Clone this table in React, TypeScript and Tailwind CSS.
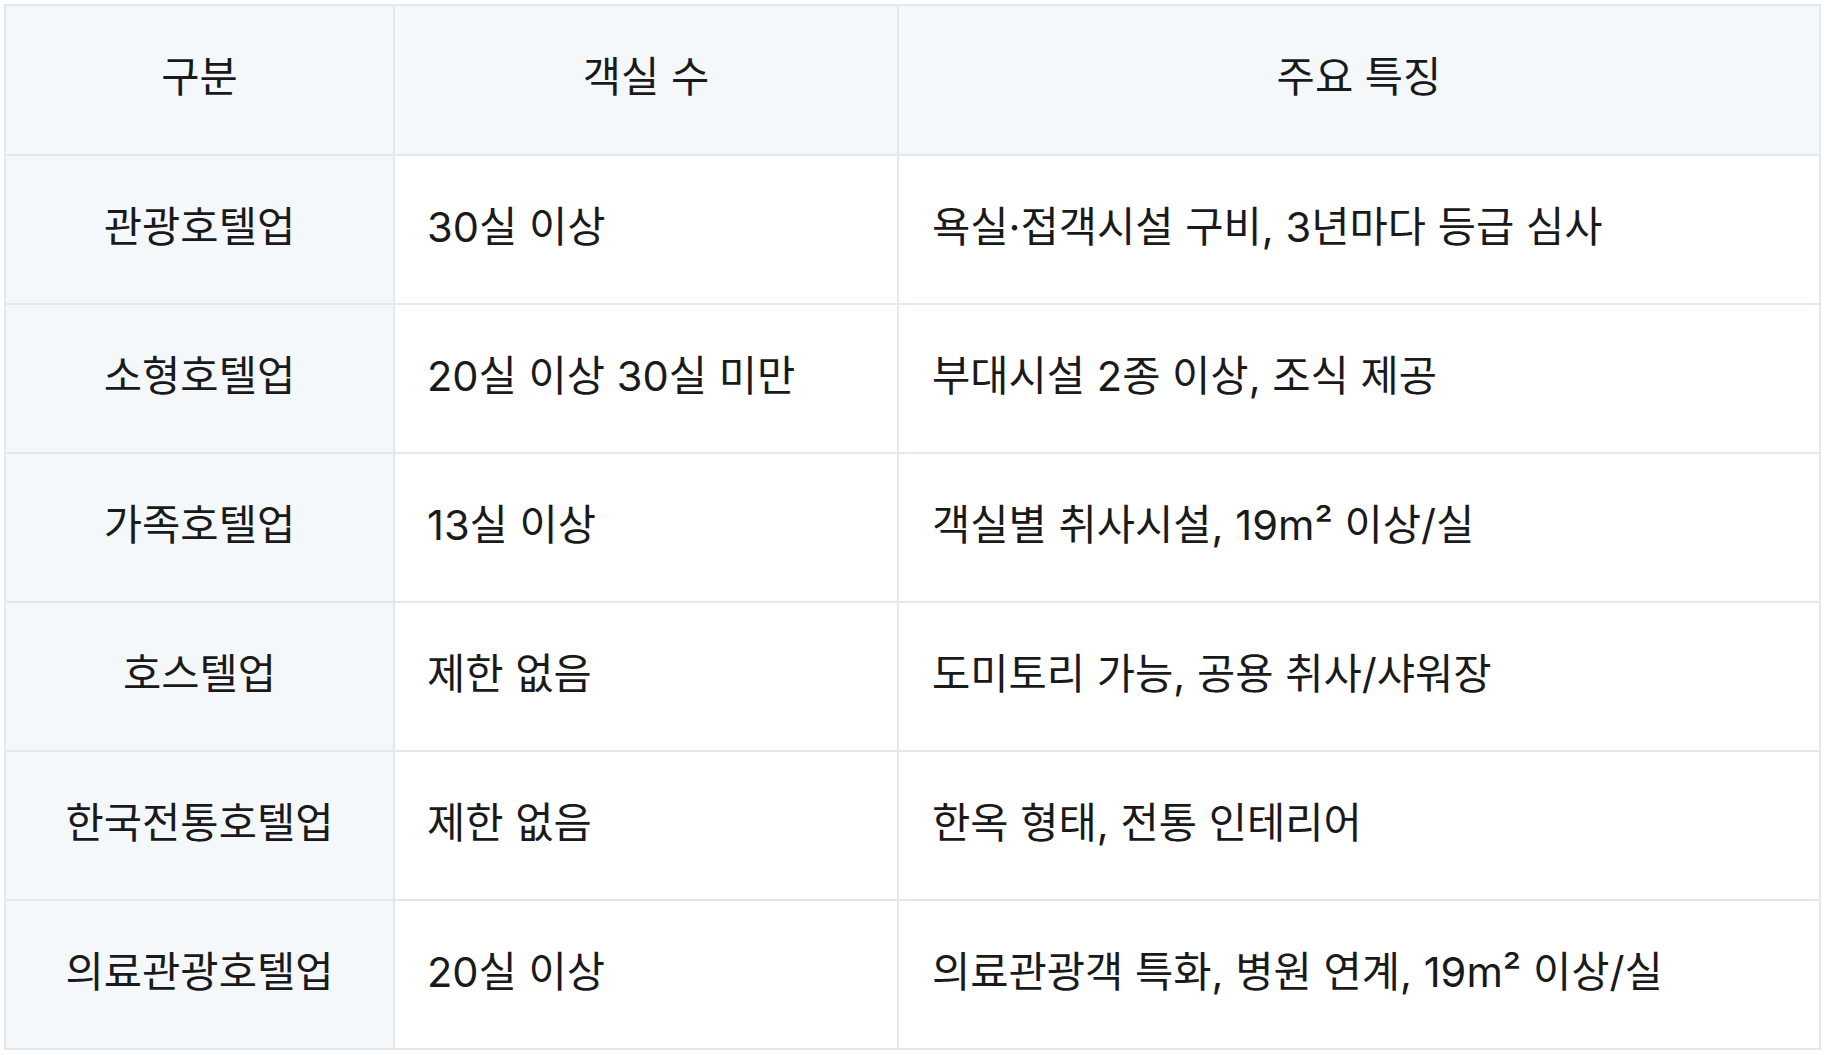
const rows = [
  { type: "관광호텔업", rooms: "30실 이상", feature: "욕실·접객시설 구비, 3년마다 등급 심사" },
  { type: "소형호텔업", rooms: "20실 이상 30실 미만", feature: "부대시설 2종 이상, 조식 제공" },
  { type: "가족호텔업", rooms: "13실 이상", feature: "객실별 취사시설, 19m² 이상/실" },
  { type: "호스텔업", rooms: "제한 없음", feature: "도미토리 가능, 공용 취사/샤워장" },
  { type: "한국전통호텔업", rooms: "제한 없음", feature: "한옥 형태, 전통 인테리어" },
  { type: "의료관광호텔업", rooms: "20실 이상", feature: "의료관광객 특화, 병원 연계, 19m² 이상/실" },
];

export default function App() {
  return (
    <div
      className="min-h-screen bg-white p-1 text-[41.6px] leading-none text-[#1a1a1a]"
      style={{ fontFamily: 'Inter, "Noto Sans CJK KR", sans-serif' }}
    >
      <table className="w-full table-fixed border-collapse border-2 border-[#e3e8ee]">
        <colgroup>
          <col className="w-[389px]" />
          <col className="w-[504px]" />
          <col />
        </colgroup>
        <thead>
          <tr className="h-[150px] bg-[#f5f8fa]">
            <th className="border-2 border-[#e3e8ee] pb-1 text-center font-normal">구분</th>
            <th className="border-2 border-[#e3e8ee] pb-1 text-center font-normal">객실 수</th>
            <th className="border-2 border-[#e3e8ee] pb-1 text-center font-normal">주요 특징</th>
          </tr>
        </thead>
        <tbody>
          {rows.map((row) => (
            <tr className="h-[149px]" key={row.type}>
              <td className="border-2 border-[#e3e8ee] bg-[#f5f8fa] pb-1 text-center">{row.type}</td>
              <td className="border-2 border-[#e3e8ee] px-[32px] pb-1">{row.rooms}</td>
              <td className="border-2 border-[#e3e8ee] px-[33px] pb-1">{row.feature}</td>
            </tr>
          ))}
        </tbody>
      </table>
    </div>
  );
}
